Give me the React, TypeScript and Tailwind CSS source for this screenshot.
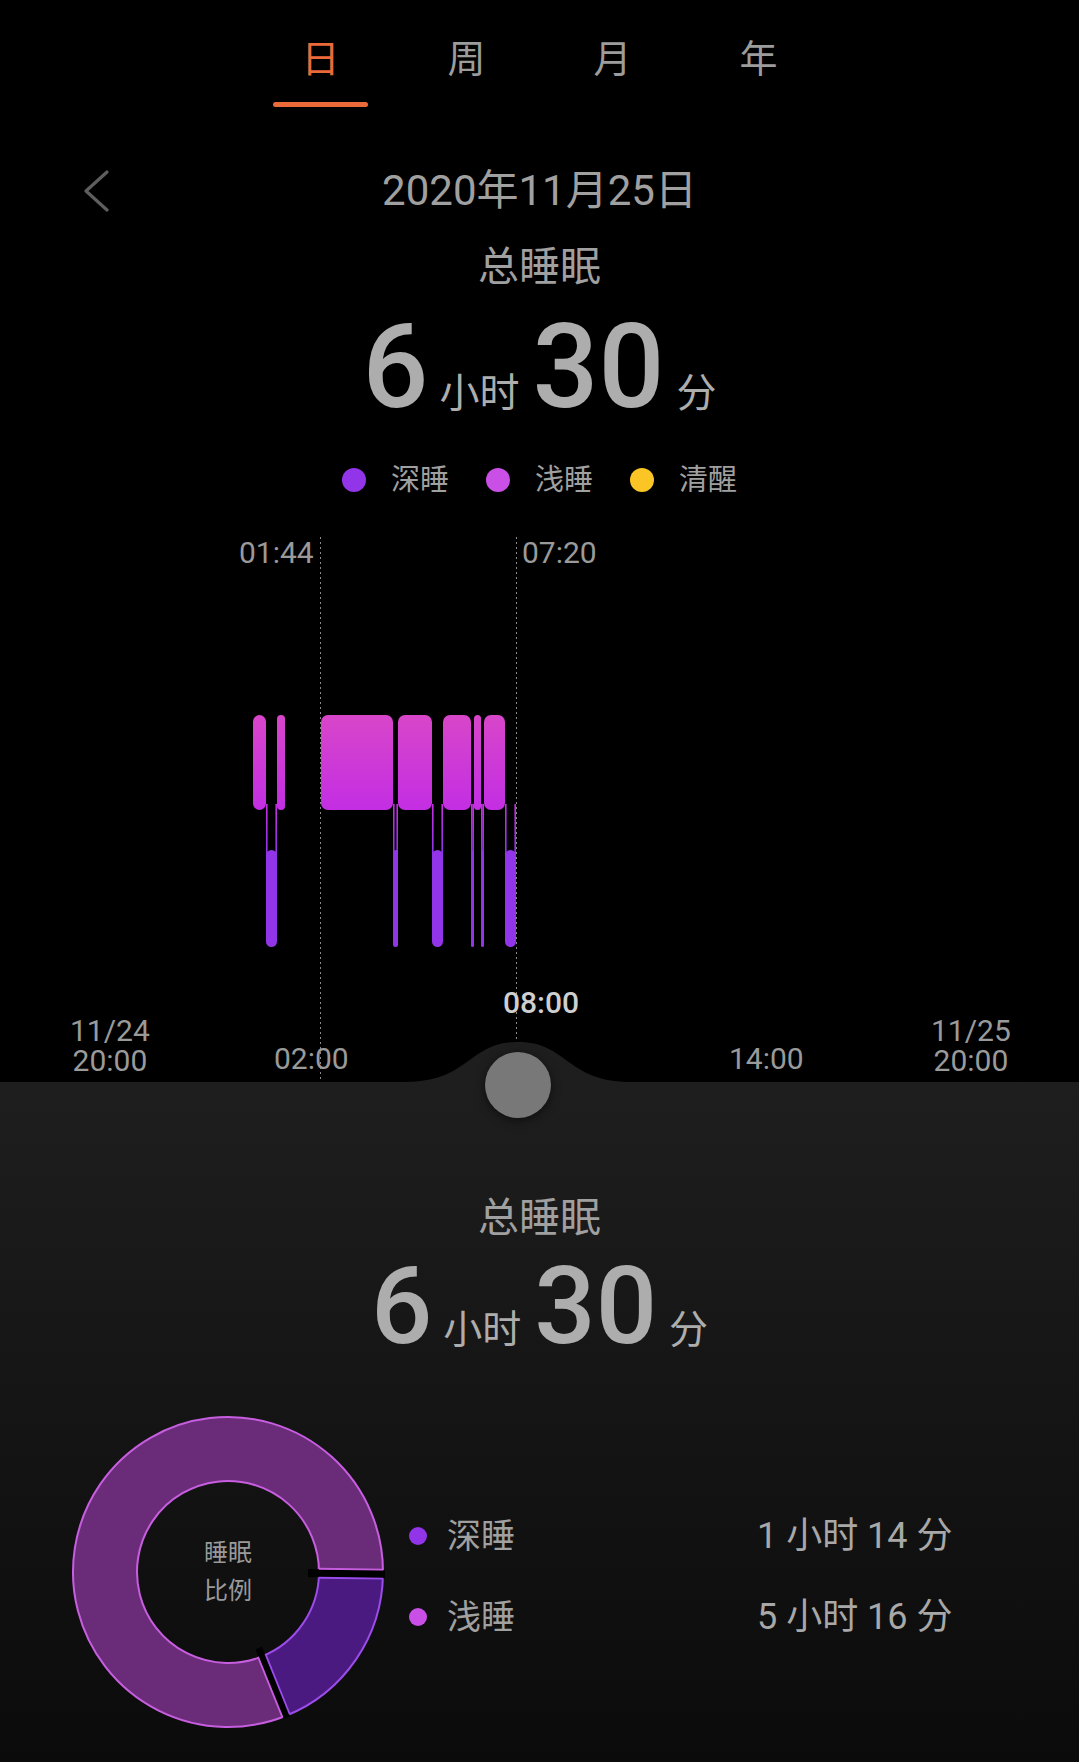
import React from 'react';

const tabs = ['日', '周', '月', '年'];

// sleep stage segments, x in page px
const lightBars: [number, number][] = [
  [253, 266],
  [277, 285],
  [321, 393],
  [398, 432],
  [443, 471],
  [474, 481],
  [484, 505],
];
const deepBars: [number, number][] = [
  [266, 277],
  [393, 398],
  [432, 443],
  [471, 474],
  [481, 484],
  [505, 516],
];

const LIGHT_TOP = 195;
const LIGHT_BOTTOM = 290;
const DEEP_TOP = 330;
const DEEP_BOTTOM = 427;

function sector(cx: number, cy: number, r0: number, r1: number, a0: number, a1: number) {
  const rad = (a: number) => (a * Math.PI) / 180;
  const p = (r: number, a: number) =>
    `${(cx + r * Math.cos(rad(a))).toFixed(2)} ${(cy + r * Math.sin(rad(a))).toFixed(2)}`;
  const large = a1 - a0 > 180 ? 1 : 0;
  return `M ${p(r1, a0)} A ${r1} ${r1} 0 ${large} 1 ${p(r1, a1)} L ${p(r0, a1)} A ${r0} ${r0} 0 ${large} 0 ${p(r0, a0)} Z`;
}

// radial line at angle a, shifted sideways by d (positive = clockwise side)
function radial(cx: number, cy: number, r0: number, r1: number, a: number, d = 0) {
  const rad = (a * Math.PI) / 180;
  const ox = -Math.sin(rad) * d;
  const oy = Math.cos(rad) * d;
  return {
    x1: cx + r0 * Math.cos(rad) + ox,
    y1: cy + r0 * Math.sin(rad) + oy,
    x2: cx + r1 * Math.cos(rad) + ox,
    y2: cy + r1 * Math.sin(rad) + oy,
  };
}

function Duration({ big, small }: { big: string; small: string }) {
  return (
    <div className="flex justify-center items-baseline text-[#adadad]">
      <span className={`${big} leading-none font-medium`}>6</span>
      <span className={`${small} leading-none ml-[11px]`}>小时</span>
      <span className={`${big} leading-none font-medium ml-[13px]`}>30</span>
      <span className={`${small} leading-none ml-[12px]`}>分</span>
    </div>
  );
}

function SleepChart() {
  return (
    <div className="relative h-[562px] w-full">
      <svg className="absolute inset-0" width="1079" height="562" viewBox="0 0 1079 562">
        <defs>
          <linearGradient id="light" x1="0" y1="0" x2="0" y2="1">
            <stop offset="0" stopColor="#d846c9" />
            <stop offset="1" stopColor="#c32ee3" />
          </linearGradient>
          <linearGradient id="conn" gradientUnits="userSpaceOnUse" x1="0" y1={LIGHT_BOTTOM} x2="0" y2={DEEP_TOP}>
            <stop offset="0" stopColor="#c22fe2" />
            <stop offset="1" stopColor="#9234e8" />
          </linearGradient>
        </defs>

        <line x1="320.5" y1="17" x2="320.5" y2="562" stroke="#8a8a8a" strokeWidth="1" strokeDasharray="2 3" />
        <line x1="516.5" y1="17" x2="516.5" y2="562" stroke="#8a8a8a" strokeWidth="1" strokeDasharray="2 3" />

        {deepBars.map(([a, b]) => (
          <g key={`c${a}`}>
            <line x1={a + 0.8} y1={LIGHT_BOTTOM - 6} x2={a + 0.8} y2={DEEP_TOP + 6} stroke="url(#conn)" strokeWidth="1.6" />
            <line x1={b - 0.8} y1={LIGHT_BOTTOM - 6} x2={b - 0.8} y2={DEEP_TOP + 6} stroke="url(#conn)" strokeWidth="1.6" />
          </g>
        ))}

        {lightBars.map(([a, b]) => (
          <rect
            key={`l${a}`}
            x={a}
            y={LIGHT_TOP}
            width={b - a}
            height={LIGHT_BOTTOM - LIGHT_TOP}
            rx={Math.min(7, (b - a) / 2)}
            fill="url(#light)"
          />
        ))}
        {deepBars.map(([a, b]) => (
          <rect
            key={`d${a}`}
            x={a}
            y={DEEP_TOP}
            width={b - a}
            height={DEEP_BOTTOM - DEEP_TOP}
            rx={Math.min(6, (b - a) / 2)}
            fill="#9234e8"
          />
        ))}

        <path d="M 405 562 C 470 562, 468 522, 518 522 C 568 522, 566 562, 631 562 Z" fill="#1e1e1e" />
      </svg>

      <span className="absolute left-[239px] top-[18px] text-[30px] leading-none text-[#9a9a9a]">01:44</span>
      <span className="absolute left-[522px] top-[18px] text-[30px] leading-none text-[#9a9a9a]">07:20</span>
      <span className="absolute left-[503px] top-[468px] text-[30px] leading-none font-medium text-[#cfcfcf]">08:00</span>

      <div className="absolute left-[70px] top-[496px] text-[30px] leading-[30px] text-[#9a9a9a] text-center">
        <div>11/24</div>
        <div>20:00</div>
      </div>
      <span className="absolute left-[274px] top-[524px] text-[30px] leading-none text-[#9a9a9a]">02:00</span>
      <span className="absolute left-[729px] top-[524px] text-[30px] leading-none text-[#9a9a9a]">14:00</span>
      <div className="absolute left-[931px] top-[496px] text-[30px] leading-[30px] text-[#9a9a9a] text-center">
        <div>11/25</div>
        <div>20:00</div>
      </div>

      <div className="absolute z-10 left-[485px] top-[532px] h-[66px] w-[66px] rounded-full bg-[#787878] shadow-[0_2px_10px_rgba(0,0,0,0.55)]" />
    </div>
  );
}

const LIGHT_FILL = '#6a2c79';
const LIGHT_EDGE = '#c75ee0';
const DEEP_FILL = '#4b1a81';
const DEEP_EDGE = '#9b4cea';

function Donut() {
  const c = 158;
  const r0 = 91;
  const r1 = 155;
  const gapA = 0.8;
  const gapB = 68;
  return (
    <div className="relative h-[316px] w-[316px] shrink-0">
      <svg width="316" height="316" viewBox="0 0 316 316">
        <path d={sector(c, c, r0, r1, gapB, 360 + gapA)} fill={LIGHT_FILL} stroke={LIGHT_EDGE} strokeWidth="2" />
        <path d={sector(c, c, r0, r1, gapA, gapB)} fill={DEEP_FILL} stroke={DEEP_EDGE} strokeWidth="2" />
        <line {...radial(c, c, 80, 157, gapA)} stroke="#000" strokeWidth="8" />
        <line {...radial(c, c, 82, 157, gapB)} stroke="#000" strokeWidth="7" />
        <line {...radial(c, c, r0, r1, gapA, -4.5)} stroke={LIGHT_EDGE} strokeWidth="1.8" />
        <line {...radial(c, c, r0, r1, gapA, 4.5)} stroke={DEEP_EDGE} strokeWidth="1.8" />
        <line {...radial(c, c, r0 - 1, r1, gapB, -4)} stroke={DEEP_EDGE} strokeWidth="1.8" />
        <line {...radial(c, c, r0 - 1, r1, gapB, 4)} stroke={LIGHT_EDGE} strokeWidth="1.8" />
      </svg>
      <div className="absolute inset-0 flex flex-col items-center justify-center text-[24px] leading-[38px] text-[#9a9a9a]">
        <span>睡眠</span>
        <span>比例</span>
      </div>
    </div>
  );
}

export default function App() {
  return (
    <div className="w-[1079px] min-h-[1762px] bg-black font-['Roboto','Noto_Sans_CJK_SC',sans-serif] flex flex-col">
      {/* period tabs */}
      <div className="flex justify-center pt-[40px]">
        {tabs.map((t, i) => (
          <div key={t} className="w-[146px] flex flex-col items-center">
            <span className={`text-[38px] leading-[38px] ${i === 0 ? 'text-[#ec6a3a]' : 'text-[#9c9c9c]'}`}>{t}</span>
            <div className={`mt-[24px] h-[5px] w-[95px] rounded-full ${i === 0 ? 'bg-[#ec6a3a]' : 'bg-transparent'}`} />
          </div>
        ))}
      </div>

      {/* date */}
      <div className="mt-[63px] h-[40px] grid grid-cols-[1fr_auto_1fr] items-center">
        <div className="pl-[84px] flex items-center">
          <svg width="26" height="42" viewBox="0 0 26 42">
            <polyline points="23,2 2,21 23,40" fill="none" stroke="#5e5e5e" strokeWidth="3.2" strokeLinecap="round" strokeLinejoin="round" />
          </svg>
        </div>
        <span className="text-[42px] leading-[40px] text-[#a0a0a0]">2020年11月25日</span>
        <div />
      </div>

      <div className="mt-[37px] h-[40px] text-center text-[41px] leading-[40px] text-[#a0a0a0]">总睡眠</div>

      <div className="mt-[22px] h-[120px]">
        <Duration big="text-[116px]" small="text-[40px]" />
      </div>

      {/* legend */}
      <div className="mt-[36px] h-[30px] flex justify-center items-center text-[29px] leading-none text-[#a0a0a0]">
        <span className="h-[24px] w-[24px] rounded-full bg-[#9234e8] mr-[25px]" />
        <span className="mr-[37px]">深睡</span>
        <span className="h-[24px] w-[24px] rounded-full bg-[#c94fe6] mr-[25px]" />
        <span className="mr-[37px]">浅睡</span>
        <span className="h-[24px] w-[24px] rounded-full bg-[#fcc526] mr-[25px]" />
        <span>清醒</span>
      </div>

      <div className="mt-[25px]">
        <SleepChart />
      </div>

      {/* summary panel */}
      <div className="flex-1 bg-gradient-to-b from-[#1e1e1e] to-[#0b0b0b] pt-[116px]">
        <div className="h-[40px] text-center text-[41px] leading-[40px] text-[#a0a0a0]">总睡眠</div>
        <div className="mt-[14px] h-[110px]">
          <Duration big="text-[108px]" small="text-[39px]" />
        </div>
        <div className="mt-[52px] flex pl-[70px]">
          <Donut />
          <div className="ml-[23px] mt-[102px] flex flex-col gap-[41px]">
            {[
              { label: '深睡', value: '1 小时 14 分', color: 'bg-[#9234e8]' },
              { label: '浅睡', value: '5 小时 16 分', color: 'bg-[#c94fe6]' },
            ].map((r) => (
              <div key={r.label} className="h-[40px] flex items-center text-[34px] leading-none">
                <div className="w-[348px] flex items-center">
                  <span className={`h-[18px] w-[18px] rounded-full ${r.color}`} />
                  <span className="ml-[20px] text-[#a0a0a0]">{r.label}</span>
                </div>
                <span className="text-[36px] text-[#a8a8a8] whitespace-pre">{r.value}</span>
              </div>
            ))}
          </div>
        </div>
      </div>
    </div>
  );
}
